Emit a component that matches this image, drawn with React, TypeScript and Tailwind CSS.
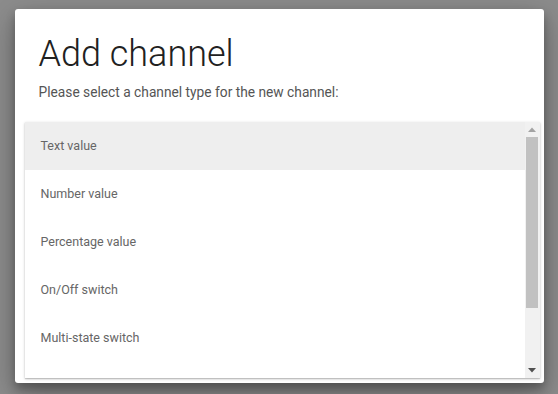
const channelTypes = ['Text value', 'Number value', 'Percentage value', 'On/Off switch', 'Multi-state switch'];

function Scrollbar() {
  return (
    <div className="flex w-[15px] shrink-0 flex-col bg-[#f1f1f1]">
      <div className="flex h-[15px] items-center justify-center">
        <svg width="8" height="5" viewBox="0 0 8 5">
          <path d="M0 5 L4 0.5 L8 5 Z" fill="#a3a3a3" />
        </svg>
      </div>
      <div className="flex-1">
        <div className="ml-px mr-[2px] h-[171px] bg-[#c1c1c1]" />
      </div>
      <div className="flex h-[15px] items-center justify-center">
        <svg width="8" height="5" viewBox="0 0 8 5">
          <path d="M0 0 L8 0 L4 4.5 Z" fill="#505050" />
        </svg>
      </div>
    </div>
  );
}

export default function App() {
  return (
    <div className="flex h-[394px] w-[558px] items-start justify-center bg-[#8c8c8c] pt-[9px] font-['Roboto',sans-serif]">
      <div className="flex h-[374px] w-[529px] flex-col rounded-[3px] bg-white shadow-[0_10px_30px_rgba(0,0,0,0.3),0_6px_10px_rgba(0,0,0,0.25)]">
        <div className="px-6 pt-[21px]">
          <h1 className="text-[36px] leading-[48px] font-light text-[#212121]">Add channel</h1>
          <p className="mt-[4px] text-[13.75px] leading-5 text-[#555]">
            Please select a channel type for the new channel:
          </p>
        </div>
        <div className="mt-[20px] ml-[10px] mr-[4px] flex h-[256px] shrink-0 overflow-hidden bg-white shadow-[0_1px_3px_rgba(0,0,0,0.2),0_1px_1px_rgba(0,0,0,0.14)]">
          <div className="flex-1">
            {channelTypes.map((type, index) => (
              <div
                key={type}
                className={`flex h-12 items-center pl-4 text-[12.5px] text-[#666] ${index === 0 ? 'bg-[#eeeeee]' : ''}`}
              >
                {type}
              </div>
            ))}
          </div>
          <Scrollbar />
        </div>
      </div>
    </div>
  );
}
